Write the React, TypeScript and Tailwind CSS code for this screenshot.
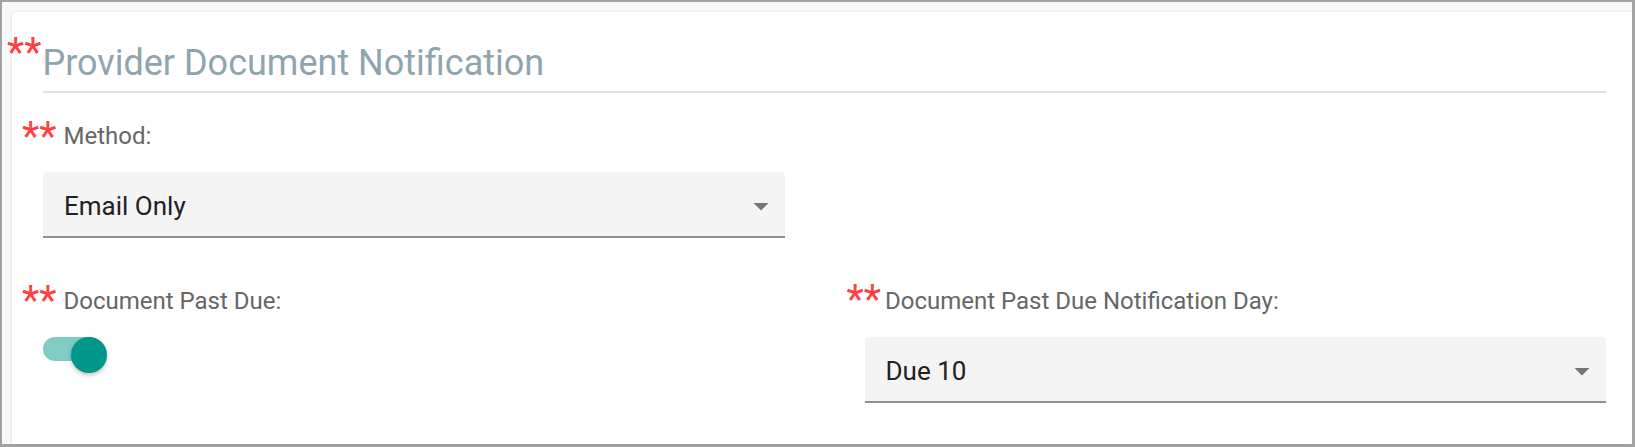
import { FC } from "react";

const font = { fontFamily: "Roboto, 'Noto Sans', sans-serif" };

const Stars: FC<{ className?: string }> = ({ className }) => (
  <span className={`shrink-0 text-[40px] leading-[28px] text-[#ff4040] relative ${className ?? ""}`}>**</span>
);

const SelectBox: FC<{ value: string }> = ({ value }) => (
  <div className="flex h-[66px] items-center justify-between rounded-t-[4px] border-b-2 border-[#8f8f8f] bg-[#f4f4f4] pl-[21px] pr-[6px] pt-[3px]">
    <span className="text-[26px] leading-[30px] text-[#212121]">{value}</span>
    <svg width="36" height="36" viewBox="0 0 24 24" className="shrink-0">
      <path d="M7 10l5 5 5-5z" fill="#757575" />
    </svg>
  </div>
);

const FieldLabel: FC<{ text: string; shift: string; gap: string; starTop: string }> = ({ text, shift, gap, starTop }) => (
  <div className={`flex items-start ${shift} ${gap}`}>
    <Stars className={starTop} />
    <span className="text-[24px] leading-[28px] text-[#666666]">{text}</span>
  </div>
);

export default function App() {
  return (
    <div
      className="h-[447px] w-full border-t-2 border-l-2 border-r-[3px] border-b-[3px] border-[#a3a3a3] bg-[#f8f9fb] pl-[10px] pt-[10px]"
      style={font}
    >
      <div className="h-full rounded-tl-[4px] bg-white pl-[31px] pr-[26px] pt-[30px] shadow-[-1px_0_3px_rgba(0,0,0,0.08)]">
        {/* heading */}
        <div className="-ml-[36px] flex items-start">
          <Stars className="-top-[3px]" />
          <h2 className="ml-[1px] text-[36px] leading-[42px] font-normal text-[#90a4ae]">Provider Document Notification</h2>
        </div>
        <div className="mt-[7px] h-[2px] bg-[#e0e0e0]" />

        {/* method */}
        <div className="mt-[29px] grid grid-cols-2 gap-x-[80px]">
          <div>
            <FieldLabel text="Method:" shift="-ml-[21px]" gap="gap-[7px]" starTop="top-[1px]" />
            <div className="mt-[22px]">
              <SelectBox value="Email Only" />
            </div>
          </div>
        </div>

        {/* past due */}
        <div className="mt-[49px] grid grid-cols-2 gap-x-[80px]">
          <div>
            <FieldLabel text="Document Past Due:" shift="-ml-[21px]" gap="gap-[7px]" starTop="top-0" />
            <div className="relative mt-[22px] h-[36px] w-[64px]">
              <div className="mt-[6px] h-[24px] w-[58px] rounded-full bg-[#80cbc4]" />
              <div className="absolute left-[28px] top-0 h-[36px] w-[36px] rounded-full bg-[#009688] shadow-[0_2px_4px_rgba(0,0,0,0.25)]" />
            </div>
          </div>
          <div>
            <FieldLabel
              text="Document Past Due Notification Day:"
              shift="-ml-[18px]"
              gap="gap-[4px]"
              starTop="-top-[1px]"
            />
            <div className="mt-[22px]">
              <SelectBox value="Due 10" />
            </div>
          </div>
        </div>
      </div>
    </div>
  );
}
